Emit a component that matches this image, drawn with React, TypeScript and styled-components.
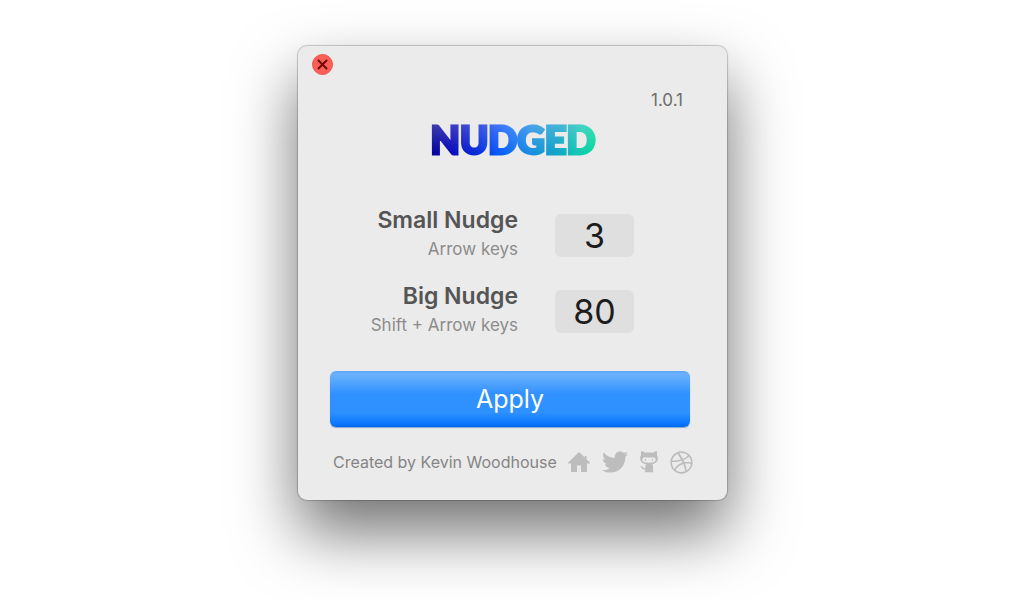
import React from "react";
import styled, { createGlobalStyle } from "styled-components";
import { FaTwitter, FaDribbble } from "react-icons/fa";

const GlobalStyle = createGlobalStyle`
  * { box-sizing: border-box; }
  body {
    margin: 0;
    background: #fff;
    font-family: Inter, "Liberation Sans", sans-serif;
  }
`;

const Page = styled.main`
  display: flex;
  justify-content: center;
  align-items: flex-start;
  min-height: 100vh;
  padding: 46px 19px 40px 16px;
  overflow: hidden;
`;

const Panel = styled.section`
  position: relative;
  width: 100%;
  max-width: 429px;
  padding: 44px 37px 16px 32px;
  border-radius: 9px;
  background: #ebebeb;
  box-shadow:
    0 0 1px 1px rgba(0, 0, 0, 0.2),
    0 32px 64px rgba(0, 0, 0, 0.56);
`;

const CloseButton = styled.button`
  position: absolute;
  top: 8px;
  left: 14px;
  display: flex;
  align-items: center;
  justify-content: center;
  width: 21px;
  height: 21px;
  padding: 0;
  border: 1px solid #ec544d;
  border-radius: 50%;
  background: #fc5f58;
  color: #6d0a08;
`;

const Version = styled.p`
  margin: 0;
  padding-right: 7px;
  color: #6c6c6c;
  font-size: 17px;
  line-height: 20px;
  text-align: right;
`;

const Brand = styled.header`
  display: flex;
  justify-content: center;
  margin-top: 5px;
  padding-left: 6px;
`;

const Logo = styled.h1`
  margin: 0;
  padding: 0 2px;
  font-family: Lato, sans-serif;
  font-size: 38px;
  font-weight: 900;
  line-height: 48px;
  color: transparent;
  background:
    linear-gradient(to bottom, rgba(255, 255, 255, 0.22) 20%, rgba(255, 255, 255, 0) 80%),
    linear-gradient(100deg, #04048c 0%, #0808b4 14%, #0a2ad8 30%, #0a5cff 44%, #1a8ce0 60%, #10a4c8 76%, #14c8b4 88%, #00dc96 100%);
  background-clip: text;
  -webkit-background-clip: text;
  -webkit-text-stroke: 3px transparent;
`;

const Form = styled.form`
  display: flex;
  flex-direction: column;
  margin-top: 34px;
`;

const Field = styled.div`
  display: grid;
  grid-template-columns: 188px 79px;
  column-gap: 37px;
  align-items: center;
  height: 76px;
`;

const FieldLabel = styled.label`
  display: flex;
  flex-direction: column;
  align-items: flex-end;
  padding-bottom: 2px;
  white-space: nowrap;
`;

const FieldName = styled.span`
  color: #555;
  font-size: 23px;
  font-weight: 600;
  line-height: 30px;
`;

const FieldHint = styled.span`
  color: #8c8c8c;
  font-size: 17px;
  line-height: 28px;
`;

const NumberInput = styled.input`
  width: 100%;
  height: 43px;
  padding: 0;
  border: 0;
  border-radius: 6px;
  background: #dfdfdf;
  color: #1c1c1c;
  font-family: inherit;
  font-size: 34px;
  line-height: 43px;
  text-align: center;
`;

const ApplyButton = styled.button`
  width: 100%;
  height: 56px;
  margin-top: 22px;
  padding: 0;
  border: 0;
  border-radius: 6px;
  background: linear-gradient(to bottom, #5ea8f6 0%, #6ab1fb 6%, #2f90ff 42%, #2f90ff 74%, #0a78ff 94%, #0067ee 100%);
  box-shadow: 0 1px 1px rgba(60, 120, 190, 0.6);
  color: #fff;
  font-family: inherit;
  font-size: 25px;
  line-height: 32px;
`;

const Footer = styled.footer`
  display: flex;
  align-items: center;
  justify-content: space-between;
  height: 44px;
  margin-top: 13px;
  padding-left: 3px;
`;

const Credit = styled.p`
  margin: 0;
  color: #858585;
  font-size: 16px;
  line-height: 24px;
  white-space: nowrap;
`;

const Links = styled.nav`
  display: flex;
  align-items: center;
  gap: 11px;
  margin-right: -3px;
`;

const IconLink = styled.a`
  display: flex;
  align-items: center;
  justify-content: center;
  color: #bdbdbd;
`;

const CloseIcon = () => (
  <svg width="11" height="11" viewBox="0 0 11 11" stroke="currentColor" strokeWidth="2" strokeLinecap="round" aria-hidden="true">
    <path d="M1.5 1.5l8 8M9.5 1.5l-8 8" />
  </svg>
);

const HomeIcon = () => (
  <svg width="24" height="24" viewBox="0 0 24 24" fill="currentColor" aria-hidden="true">
    <path d="M12 2L17.700 7.400V6h1.800v3.200L22.800 12.500c.5.500.3 1-.4 1H20V21c0 .6-.4 1-1 1h-5v-6.500h-4V22H5c-.6 0-1-.4-1-1v-7.500H1.600c-.7 0-.9-.5-.4-1z" />
  </svg>
);

const OctocatIcon = () => (
  <svg width="20" height="24" viewBox="0 0 20 24" fill="currentColor" aria-hidden="true">
    <path
      fillRule="evenodd"
      d="M2.300 1c1.600.2 3 1 4 1.800 2.400-.5 5-.5 7.400 0 1-.8 2.400-1.600 4-1.800.5 1.300.5 2.700.2 4 .7.900 1 2 1 3.300 0 3.800-2.600 5.500-5.800 5.900.6.700.9 1.500.9 2.400V21c0 .6.300.9.800 1.200H5.400c.5-.3.800-.6.800-1.200v-1.600c-2.200.3-3-.4-3.600-1.600-.4-.8-.9-1.300-1.600-1.700 1.900-.5 2.700.8 3.300 1.500.5.600 1.100.7 1.900.4 0-1.500.2-3 1-3.800C3.900 13.800 1.100 12.100 1.100 8.300c0-1.300.3-2.400 1-3.300-.3-1.300-.3-2.700.2-4zM6 7.200C4.300 7.200 3.300 8.200 3.300 9.600c0 2.400 2.200 3.100 6.700 3.100s6.700-.7 6.700-3.100c0-1.400-1-2.400-2.700-2.400-1.400 0-2.500.3-4 .3s-2.600-.3-4-.3z"
    />
    <ellipse cx="6.500" cy="9.800" rx="0.700" ry="1.100" />
    <ellipse cx="13.500" cy="9.800" rx="0.700" ry="1.100" />
  </svg>
);

const fields = [
  { id: "small-nudge", name: "Small Nudge", hint: "Arrow keys", value: "3" },
  { id: "big-nudge", name: "Big Nudge", hint: "Shift + Arrow keys", value: "80" },
];

export default function App() {
  return (
    <>
      <GlobalStyle />
      <Page>
        <Panel>
          <CloseButton type="button" aria-label="Close">
            <CloseIcon />
          </CloseButton>
          <Version>1.0.1</Version>
          <Brand>
            <Logo>NUDGED</Logo>
          </Brand>
          <Form onSubmit={(e) => e.preventDefault()}>
            {fields.map((f) => (
              <Field key={f.id}>
                <FieldLabel htmlFor={f.id}>
                  <FieldName>{f.name}</FieldName>
                  <FieldHint>{f.hint}</FieldHint>
                </FieldLabel>
                <NumberInput id={f.id} type="text" inputMode="numeric" defaultValue={f.value} />
              </Field>
            ))}
            <ApplyButton type="submit">Apply</ApplyButton>
          </Form>
          <Footer>
            <Credit>Created by Kevin Woodhouse</Credit>
            <Links aria-label="Author links">
              <IconLink href="#home" aria-label="Website">
                <HomeIcon />
              </IconLink>
              <IconLink href="#twitter" aria-label="Twitter">
                <FaTwitter size={26} />
              </IconLink>
              <IconLink href="#github" aria-label="GitHub">
                <OctocatIcon />
              </IconLink>
              <IconLink href="#dribbble" aria-label="Dribbble">
                <FaDribbble size={23} />
              </IconLink>
            </Links>
          </Footer>
        </Panel>
      </Page>
    </>
  );
}
